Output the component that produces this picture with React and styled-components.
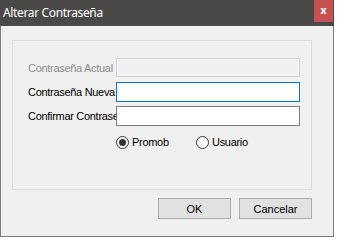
import React from "react";
import styled, { createGlobalStyle } from "styled-components";

const Global = createGlobalStyle`
  html, body { margin: 0; padding: 0; background: #ffffff; }
  body { font-family: "Liberation Sans", Arial, sans-serif; }
`;

const Window = styled.div`
  width: 334px;
  height: 237px;
  box-sizing: border-box;
  border: 1px solid #7a7a7a;
  border-top: none;
  background: #f0f0f0;
  display: flex;
  flex-direction: column;
`;

const TitleBar = styled.div`
  height: 26px;
  margin: 0 -1px;
  background: #4b4947;
  display: flex;
  align-items: flex-start;
  justify-content: space-between;
`;

const Title = styled.span`
  font-family: "Noto Sans", "Open Sans", sans-serif;
  font-size: 12px;
  color: #ffffff;
  padding: 4px 0 0 3px;
  letter-spacing: -0.35px;
`;

const CloseButton = styled.div`
  width: 19px;
  height: 22px;
  margin-right: 1px;
  background: #c75050;
  color: #ffffff;
  font-family: "DejaVu Sans", sans-serif;
  font-weight: bold;
  font-size: 10px;
  display: flex;
  align-items: center;
  justify-content: center;
  padding-bottom: 2px;
  box-sizing: border-box;
`;

const Content = styled.div`
  padding: 14px 21px 0 11px;
  display: flex;
  flex-direction: column;
`;

const GroupBox = styled.div`
  width: 300px;
  height: 150px;
  box-sizing: border-box;
  border: 1px solid #dcdcdc;
  padding: 17px 0 0 15px;
  display: flex;
  flex-direction: column;
`;

const FieldGrid = styled.div`
  display: grid;
  grid-template-columns: 88px 184px;
  grid-auto-rows: 20px;
  row-gap: 4px;
  align-items: center;
`;

const Label = styled.div`
  font-size: 11px;
  letter-spacing: -0.3px;
  color: ${(p) => (p.$disabled ? "#8d8d8d" : "#000000")};
  white-space: nowrap;
  overflow: hidden;
`;

const Field = styled.div`
  height: ${(p) => (p.$disabled ? "19px" : "20px")};
  align-self: start;
  box-sizing: border-box;
  border: 1px solid
    ${(p) => (p.$focused ? "#0078d7" : p.$disabled ? "#cccccc" : "#7a7a7a")};
  background: ${(p) => (p.$disabled ? "#f0f0f0" : "#ffffff")};
  box-shadow: ${(p) => (p.$disabled ? "inset 0 0 0 1px #fbfbfb" : "none")};
`;

const RadioRow = styled.div`
  display: flex;
  align-items: center;
  margin: 9px 0 0 88px;
  height: 14px;
`;

const RadioOption = styled.div`
  display: flex;
  align-items: center;
  gap: 3px;
  width: 80px;
  font-size: 11px;
  letter-spacing: -0.3px;
  color: #000;
`;

const RadioCircle = styled.span`
  width: 13px;
  height: 13px;
  box-sizing: border-box;
  border-radius: 50%;
  border: 1px solid #333333;
  background: #ffffff;
  display: flex;
  align-items: center;
  justify-content: center;
  &::after {
    content: "";
    width: 7px;
    height: 7px;
    border-radius: 50%;
    background: ${(p) => (p.$checked ? "#333333" : "transparent")};
  }
`;

const ButtonRow = styled.div`
  display: flex;
  justify-content: flex-end;
  gap: 8px;
  margin-top: 8px;
  width: 300px;
`;

const Button = styled.div`
  width: 73px;
  height: 21px;
  box-sizing: border-box;
  border: 1px solid #adadad;
  background: #e1e1e1;
  font-size: 11px;
  color: #000;
  display: flex;
  align-items: center;
  justify-content: center;
`;

export default function App() {
  return (
    <>
      <Global />
      <Window>
        <TitleBar>
          <Title>Alterar Contraseña</Title>
          <CloseButton>x</CloseButton>
        </TitleBar>
        <Content>
          <GroupBox>
            <FieldGrid>
              <Label $disabled>Contraseña Actual</Label>
              <Field $disabled />
              <Label>Contraseña Nueva</Label>
              <Field $focused />
              <Label>Confirmar Contraseña</Label>
              <Field />
            </FieldGrid>
            <RadioRow>
              <RadioOption>
                <RadioCircle $checked />
                Promob
              </RadioOption>
              <RadioOption>
                <RadioCircle />
                Usuario
              </RadioOption>
            </RadioRow>
          </GroupBox>
          <ButtonRow>
            <Button>OK</Button>
            <Button>Cancelar</Button>
          </ButtonRow>
        </Content>
      </Window>
    </>
  );
}
